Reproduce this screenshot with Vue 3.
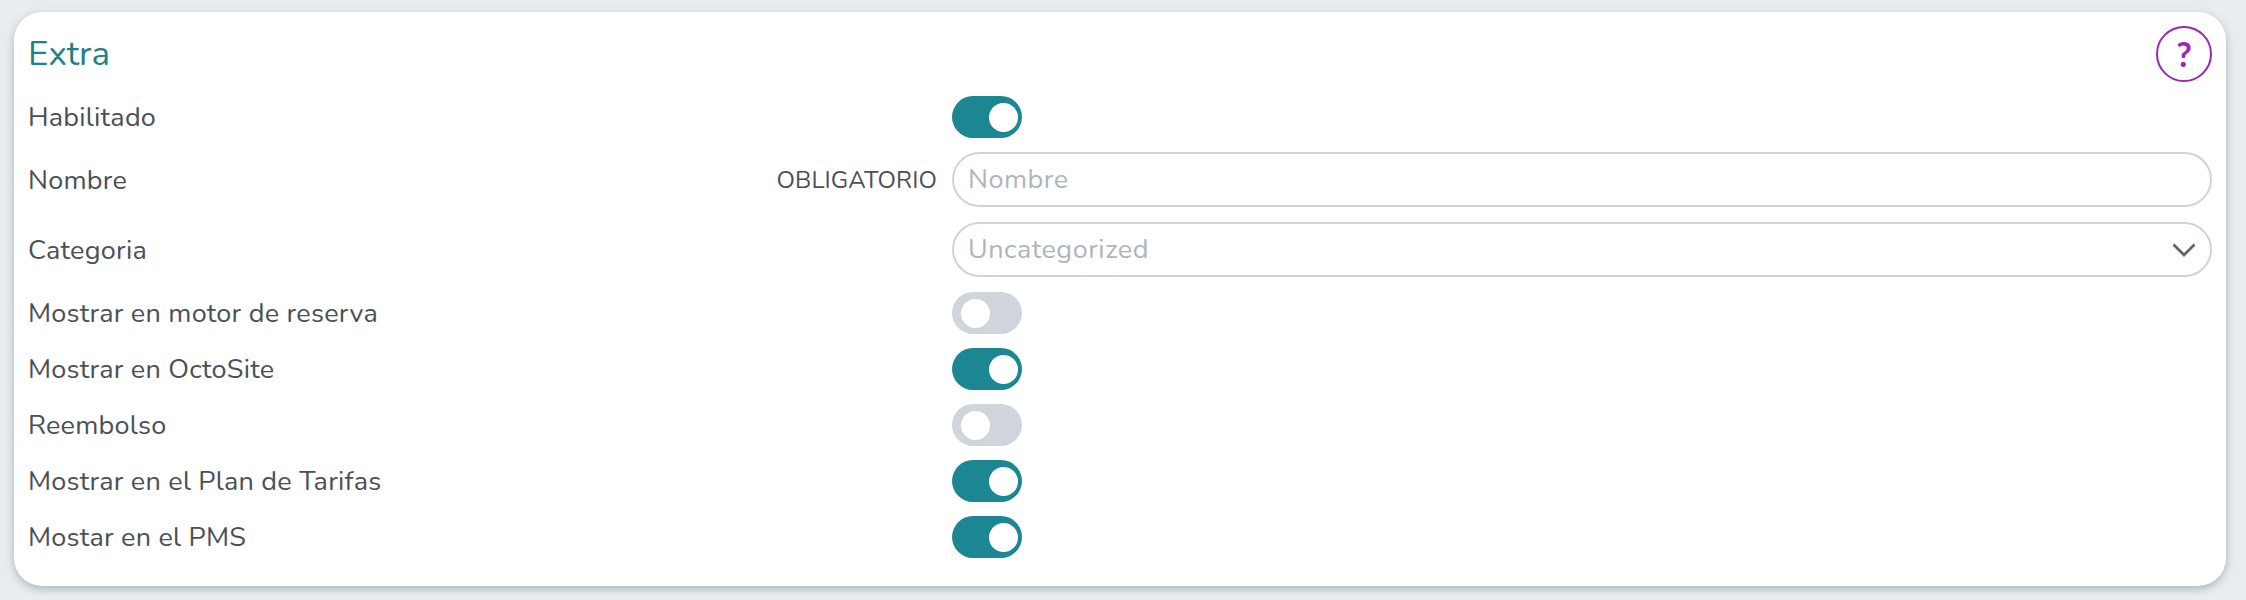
<script setup>
const rows = [
  { label: 'Habilitado', type: 'toggle', on: true },
  { label: 'Nombre', type: 'input', placeholder: 'Nombre', required: true },
  { label: 'Categoria', type: 'select', placeholder: 'Uncategorized' },
  { label: 'Mostrar en motor de reserva', type: 'toggle', on: false },
  { label: 'Mostrar en OctoSite', type: 'toggle', on: true },
  { label: 'Reembolso', type: 'toggle', on: false },
  { label: 'Mostrar en el Plan de Tarifas', type: 'toggle', on: true },
  { label: 'Mostar en el PMS', type: 'toggle', on: true }
]
</script>

<template>
  <div class="page">
    <section class="card">
      <header class="card-head">
        <h2 class="title">Extra</h2>
        <button class="help" type="button">?</button>
      </header>
      <div v-for="row in rows" :key="row.label" class="row">
        <div class="label">
          <span>{{ row.label }}</span>
          <span v-if="row.required" class="required">OBLIGATORIO</span>
        </div>
        <div class="field">
          <span v-if="row.type === 'toggle'" class="toggle" :class="{ on: row.on }"><i class="knob"></i></span>
          <div v-else class="control">
            <span class="placeholder">{{ row.placeholder }}</span>
            <svg v-if="row.type === 'select'" class="chevron" viewBox="0 0 24 14" fill="none">
              <path d="M1.5 1.5 L12 12 L22.5 1.5" stroke="#5f666c" stroke-width="2.8" />
            </svg>
          </div>
        </div>
      </div>
    </section>
  </div>
</template>

<style>
html,
body {
  margin: 0;
  background: #e9edf0;
}
</style>

<style scoped>
.page {
  box-sizing: border-box;
  width: 2246px;
  height: 600px;
  padding: 12px 20px 14px 14px;
  background: #e9edf0;
  font-family: "Nunito", "Lato", "Open Sans", sans-serif;
}
.card {
  box-sizing: border-box;
  height: 574px;
  padding: 14px 14px 0 14px;
  background: #fff;
  border-radius: 28px;
  box-shadow: 0 3px 8px rgba(60, 70, 80, 0.35);
}
.card-head {
  display: flex;
  justify-content: space-between;
  align-items: center;
  height: 55px;
  margin-bottom: 15px;
}
.title {
  margin: 0;
  font-size: 35px;
  line-height: 55px;
  font-weight: 400;
  color: #1f8089;
}
.help {
  width: 56px;
  height: 56px;
  padding: 0;
  border: 2px solid #9c27b0;
  border-radius: 50%;
  background: #fff;
  color: #9c27b0;
  font: 700 34px "Lato", sans-serif;
}
.row {
  display: flex;
  align-items: center;
  gap: 15px;
  margin-bottom: 14px;
}
.label {
  display: flex;
  justify-content: space-between;
  align-items: center;
  width: 909px;
  font-size: 27px;
  letter-spacing: 0.25px;
  color: #4b5057;
}
.required {
  font-size: 24px;
  letter-spacing: 0.1px;
}
.field {
  flex: 1;
  display: flex;
}
.toggle {
  position: relative;
  width: 70px;
  height: 42px;
  border-radius: 21px;
  background: #d0d4db;
}
.toggle.on {
  background: #1c8693;
}
.knob {
  position: absolute;
  top: 6.5px;
  left: 9px;
  width: 29px;
  height: 29px;
  border-radius: 50%;
  background: #fff;
}
.toggle.on .knob {
  left: 37px;
}
.control {
  box-sizing: border-box;
  flex: 1;
  height: 55px;
  margin-bottom: 1px;
  padding: 0 14px;
  display: flex;
  justify-content: space-between;
  align-items: center;
  border: 2px solid #ced4da;
  border-radius: 28px;
  font-size: 27px;
  letter-spacing: 0.5px;
  color: #adb5bd;
}
.chevron {
  width: 24px;
  height: 14px;
}
</style>
